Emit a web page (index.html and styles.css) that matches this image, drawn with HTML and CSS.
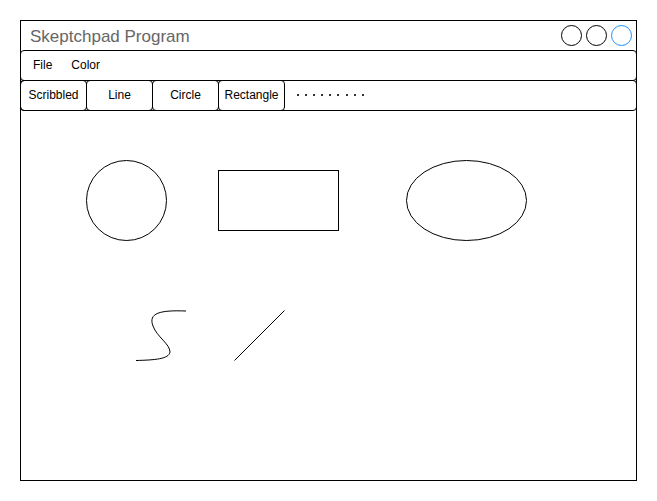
FILE: index.html
```html
<!DOCTYPE html>
<html>
<head>
<meta charset="utf-8">
<link rel="stylesheet" href="styles.css">
</head>
<body>
<div class="window">
  <div class="titlebar">
    <span class="title">Skeptchpad Program</span>
    <div class="controls">
      <span class="ctl"></span>
      <span class="ctl"></span>
      <span class="ctl ctl-blue"></span>
    </div>
  </div>
  <div class="menubar">
    <span class="menu-item">File</span>
    <span class="menu-item">Color</span>
  </div>
  <div class="toolbar">
    <div class="tool">Scribbled</div>
    <div class="tool">Line</div>
    <div class="tool">Circle</div>
    <div class="tool">Rectangle</div>
    <div class="dots">
      <i></i><i></i><i></i><i></i><i></i><i></i><i></i><i></i><i></i>
    </div>
  </div>
  <div class="canvas">
    <svg class="drawing" width="615" height="369" viewBox="21 111 615 369">
      <circle cx="126.5" cy="200.5" r="40" fill="none" stroke="#000" stroke-width="1"/>
      <rect x="218.5" y="170.5" width="120" height="60" fill="none" stroke="#000" stroke-width="1"/>
      <ellipse cx="466.5" cy="200.5" rx="60" ry="40" fill="none" stroke="#000" stroke-width="1"/>
      <path d="M186 311 C160 310 148 313 153 326 C157 337 170 344 170 352 C169 359 155 360 136 360.5" fill="none" stroke="#000" stroke-width="1"/>
      <line x1="284.5" y1="310.5" x2="234.5" y2="360.5" stroke="#000" stroke-width="1"/>
    </svg>
  </div>
</div>
</body>
</html>
```

FILE: styles.css
```css
html, body {
  margin: 0;
  padding: 0;
  background: #fff;
}
body {
  font-family: "Liberation Sans", Arial, sans-serif;
  color: #000;
}
.window {
  box-sizing: border-box;
  margin: 20px 0 0 20px;
  width: 617px;
  height: 461px;
  border: 1px solid #000;
  display: flex;
  flex-direction: column;
}
.titlebar {
  height: 29px;
  display: flex;
  align-items: center;
  justify-content: space-between;
  padding: 0 4px 0 9px;
}
.title {
  font-size: 17px;
  color: #666;
  position: relative;
  top: 1px;
}
.controls {
  display: flex;
  gap: 4px;
}
.ctl {
  box-sizing: border-box;
  width: 21px;
  height: 21px;
  border: 1px solid #000;
  border-radius: 50%;
}
.ctl-blue {
  border-color: #1e90ff;
}
.menubar {
  box-sizing: border-box;
  height: 31px;
  margin: 0 -1px;
  border: 1px solid #000;
  border-radius: 4px;
  display: flex;
  align-items: center;
  padding: 0 0 2px 12px;
  gap: 19px;
  font-size: 12px;
}
.toolbar {
  box-sizing: border-box;
  height: 31px;
  margin: -1px -1px 0;
  border: 1px solid #000;
  border-radius: 4px;
  display: flex;
  align-items: center;
}
.tool {
  box-sizing: border-box;
  width: 67px;
  height: 31px;
  margin: -1px 0 -1px -1px;
  border: 1px solid #000;
  border-radius: 4px;
  display: flex;
  align-items: center;
  justify-content: center;
  padding-bottom: 2px;
  font-size: 12px;
}
.dots {
  display: flex;
  gap: 6.1px;
  margin-left: 12px;
  margin-top: -2px;
}
.dots i {
  width: 2px;
  height: 2px;
  background: #333;
}
.canvas {
  flex: 1;
  overflow: hidden;
}
.drawing {
  display: block;
}
```
